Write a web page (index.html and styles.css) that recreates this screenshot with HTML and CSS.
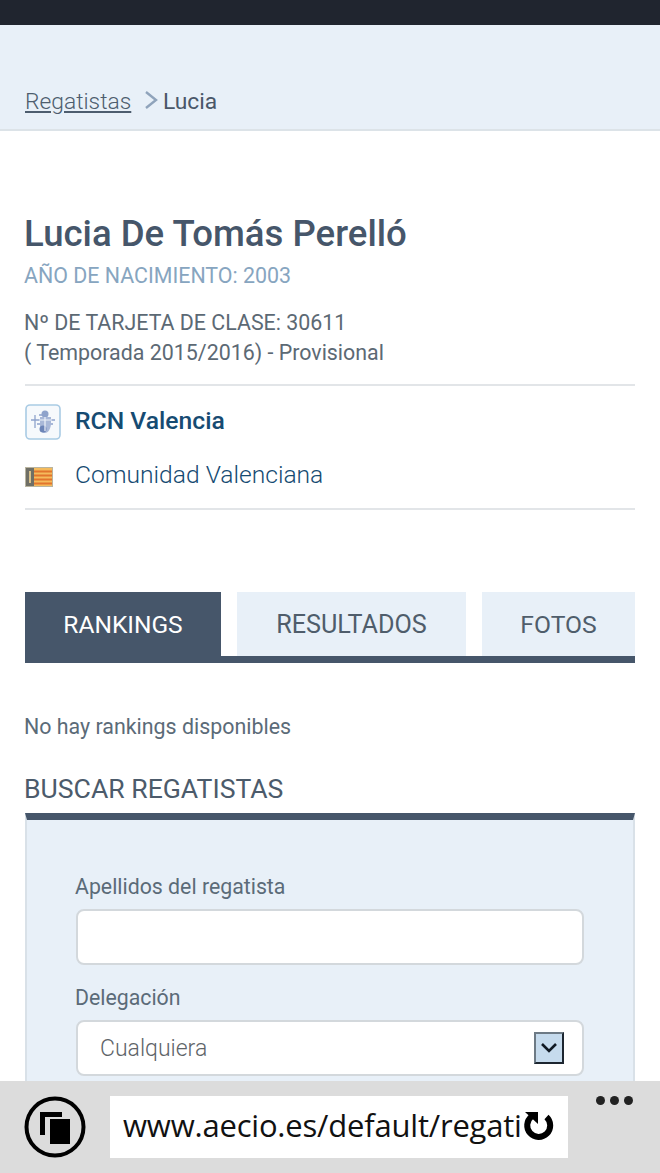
FILE: index.html
```html
<!DOCTYPE html>
<html lang="es">
<head>
<meta charset="utf-8">
<title>Lucia De Tomás Perelló</title>
<link rel="stylesheet" href="styles.css">
</head>
<body>
<div class="topbar"></div>
<nav class="crumbs">
  <a class="crumb-link" href="#">Regatistas</a>
  <svg class="crumb-sep" width="16" height="20" viewBox="0 0 16 20"><path d="M2 2l10 8-10 8" fill="none" stroke="#8fa3bb" stroke-width="2.4"/></svg>
  <span class="crumb-current">Lucia</span>
</nav>
<main class="content">
  <h1 class="name">Lucia De Tomás Perelló</h1>
  <p class="birth">AÑO DE NACIMIENTO: 2003</p>
  <p class="card">Nº DE TARJETA DE CLASE: 30611<br>( Temporada 2015/2016) - Provisional</p>
  <div class="affil">
    <div class="affil-row">
      <span class="club-logo">
        <svg width="36" height="36" viewBox="0 0 36 36"><rect x="1" y="1" width="34" height="34" rx="4" fill="#f6f9fc" stroke="#a9cbe4" stroke-width="1.6"/><path d="M6 16h24M10 11v13M14 11h9M12 20h16" fill="none" stroke="#8ea3cc" stroke-width="1.3"/><circle cx="20" cy="10" r="3.500" fill="#8fa3cb"/><path d="M15 13h11v6c0 6-3 10-6 10-3 0-5-2-5-5z" fill="#a9b8d8"/><circle cx="18" cy="25" r="3.500" fill="#6d85b8"/><path d="M14 16h13M20 13v14" stroke="#eef2f8" stroke-width="1.200"/></svg>
      </span>
      <a class="club" href="#">RCN Valencia</a>
    </div>
    <div class="affil-row">
      <span class="flag-logo">
        <svg width="28" height="20" viewBox="0 0 28 20"><rect width="28" height="20" fill="#b9b4a0"/><rect x="9" y="1" width="18" height="18" fill="#f5bb5c"/><path d="M9 4.500h18M9 8.500h18M9 12.500h18M9 16.500h18" stroke="#e2752d" stroke-width="1.800"/><rect x="1" y="1" width="8" height="18" fill="#6f6f66"/><rect x="4" y="4" width="2" height="12" fill="#d8c089"/></svg>
      </span>
      <a class="region" href="#">Comunidad Valenciana</a>
    </div>
  </div>
  <div class="tabs">
    <a class="tab tab-active" href="#">RANKINGS</a>
    <a class="tab tab-results" href="#">RESULTADOS</a>
    <a class="tab tab-photos" href="#">FOTOS</a>
  </div>
  <p class="empty">No hay rankings disponibles</p>
  <h2 class="search-title">BUSCAR REGATISTAS</h2>
  <form class="search">
    <label class="field-label">Apellidos del regatista</label>
    <div class="input"></div>
    <label class="field-label field-second">Delegación</label>
    <div class="input select">
      <span>Cualquiera</span>
      <span class="select-btn"><svg width="18" height="12" viewBox="0 0 18 12"><path d="M2 2l7 7 7-7" fill="none" stroke="#111a24" stroke-width="2.6"/></svg></span>
    </div>
  </form>
</main>
<div class="browser">
  <span class="tabs-btn">
    <svg width="62" height="62" viewBox="0 0 62 62"><circle cx="31" cy="31" r="28.500" fill="none" stroke="#000" stroke-width="4"/><path d="M16 16h22v5H21v18h-5z" fill="#000"/><rect x="26" y="23" width="20" height="25" fill="#000"/></svg>
  </span>
  <div class="address">
    <span class="url">www.aecio.es/default/regati</span>
    <svg class="reload" width="32" height="32" viewBox="0 0 32 32"><path d="M9.500 7.500A11.500 11.500 0 1 0 24.500 8" fill="none" stroke="#000" stroke-width="6"/><path d="M3 3h13v12z" fill="#000"/></svg>
  </div>
  <div class="dots"><i></i><i></i><i></i></div>
</div>
</body>
</html>
```
FILE: styles.css
```css
* { box-sizing: border-box; }
html, body { margin: 0; height: 1173px; overflow: hidden; }
body { background: #fff; font-family: Roboto, "Liberation Sans", sans-serif; color: #5b6b78; position: relative; }
p, h1, h2 { margin: 0; }
a { color: inherit; }

.topbar { height: 25px; background: #20252f; }

.crumbs { height: 106px; padding: 63px 25px 0; background: #e8f0f8; border-bottom: 2px solid #dce3e8; display: flex; align-items: flex-start; font-size: 22.800px; line-height: 28px; }
.crumb-link { font-weight: 300; color: #4d5d6e; width: 106px; }
.crumb-sep { margin: 2px 0 0 13px; }
.crumb-current { margin-left: 3px; color: #4a5769; }

.content { padding: 85px 25px 0; }
.name { font-size: 36.600px; line-height: 36px; font-weight: 500; color: #46566a; margin-left: -1px; }
.birth { margin-top: 11px; font-size: 21.400px; line-height: 26px; color: #87a5c0; margin-left: -1px; }
.card { margin-top: 19px; font-size: 21.400px; line-height: 30px; color: #5c6974; margin-left: -1px; }

.affil { margin-top: 16px; padding: 7px 0 7px; border-top: 2px solid #e2e5e8; border-bottom: 2px solid #e2e5e8; display: flex; flex-direction: column; }
.affil-row { display: flex; align-items: center; height: 54px; }
.club-logo { width: 50px; display: flex; margin-top: 3px; }
.flag-logo { width: 50px; display: flex; margin-top: 5px; }
.club { font-size: 24.700px; font-weight: 500; color: #164b72; text-decoration: none; }
.region { font-size: 24.600px; font-weight: 300; color: #164b72; text-decoration: none; }

.tabs { margin-top: 82px; height: 71px; display: flex; border-bottom: 7px solid #46566a; }
.tab { display: flex; align-items: center; justify-content: center; height: 64px; font-size: 25.200px; text-decoration: none; background: #e8f0f8; color: #4f5d6b; }
.tab-active { width: 196px; background: #46566a; color: #fff; font-size: 24.500px; }
.tab-results { width: 229px; margin-left: 16px; }
.tab-photos { width: 153px; margin-left: 16px; font-size: 24.700px; }

.empty { margin-top: 49px; font-size: 21.400px; line-height: 30px; color: #5b6b78; margin-left: -1px; }
.search-title { margin-top: 31px; font-size: 26.600px; line-height: 32px; font-weight: 400; color: #4c5b6b; margin-left: -1px; }
.search { margin-top: 8px; height: 300px; padding: 53px 49px 0; background: #e8f0f8; border-top: 7px solid #46566a; border-left: 2px solid #d9e1e8; border-right: 2px solid #d9e1e8; }
.field-label { display: block; font-size: 21.300px; line-height: 28px; color: #5b6b78; margin-left: -1px; }
.field-second { margin-top: 19px; }
.input { margin-top: 8px; height: 56px; background: #fff; border: 2px solid #d3d8dc; border-radius: 8px; }
.select { padding: 0 18px 0 22px; display: flex; align-items: center; justify-content: space-between; font-size: 23px; font-weight: 300; color: #5e6468; }
.select-btn { width: 30px; height: 32px; display: flex; align-items: center; justify-content: center; background: #c6dbed; border: 2px solid #1d2630; border-left-color: #6d7a85; border-top-color: #6d7a85; }

.browser { position: absolute; left: 0; right: 0; bottom: 0; height: 92px; padding: 15px 0 0 24px; background: #dcdcdc; display: flex; align-items: flex-start; }
.tabs-btn { display: flex; width: 86px; }
.address { width: 458px; height: 62px; background: #fff; display: flex; align-items: center; padding: 0 0 4px 13px; }
.url { font-family: "Open Sans", "Noto Sans", sans-serif; font-size: 31px; color: #111; white-space: nowrap; letter-spacing: -0.2px; width: 399px; overflow: hidden; }
.dots { display: flex; gap: 5px; margin: 0 0 0 28px; }
.dots i { width: 9px; height: 9px; border-radius: 50%; background: #222; }
```
